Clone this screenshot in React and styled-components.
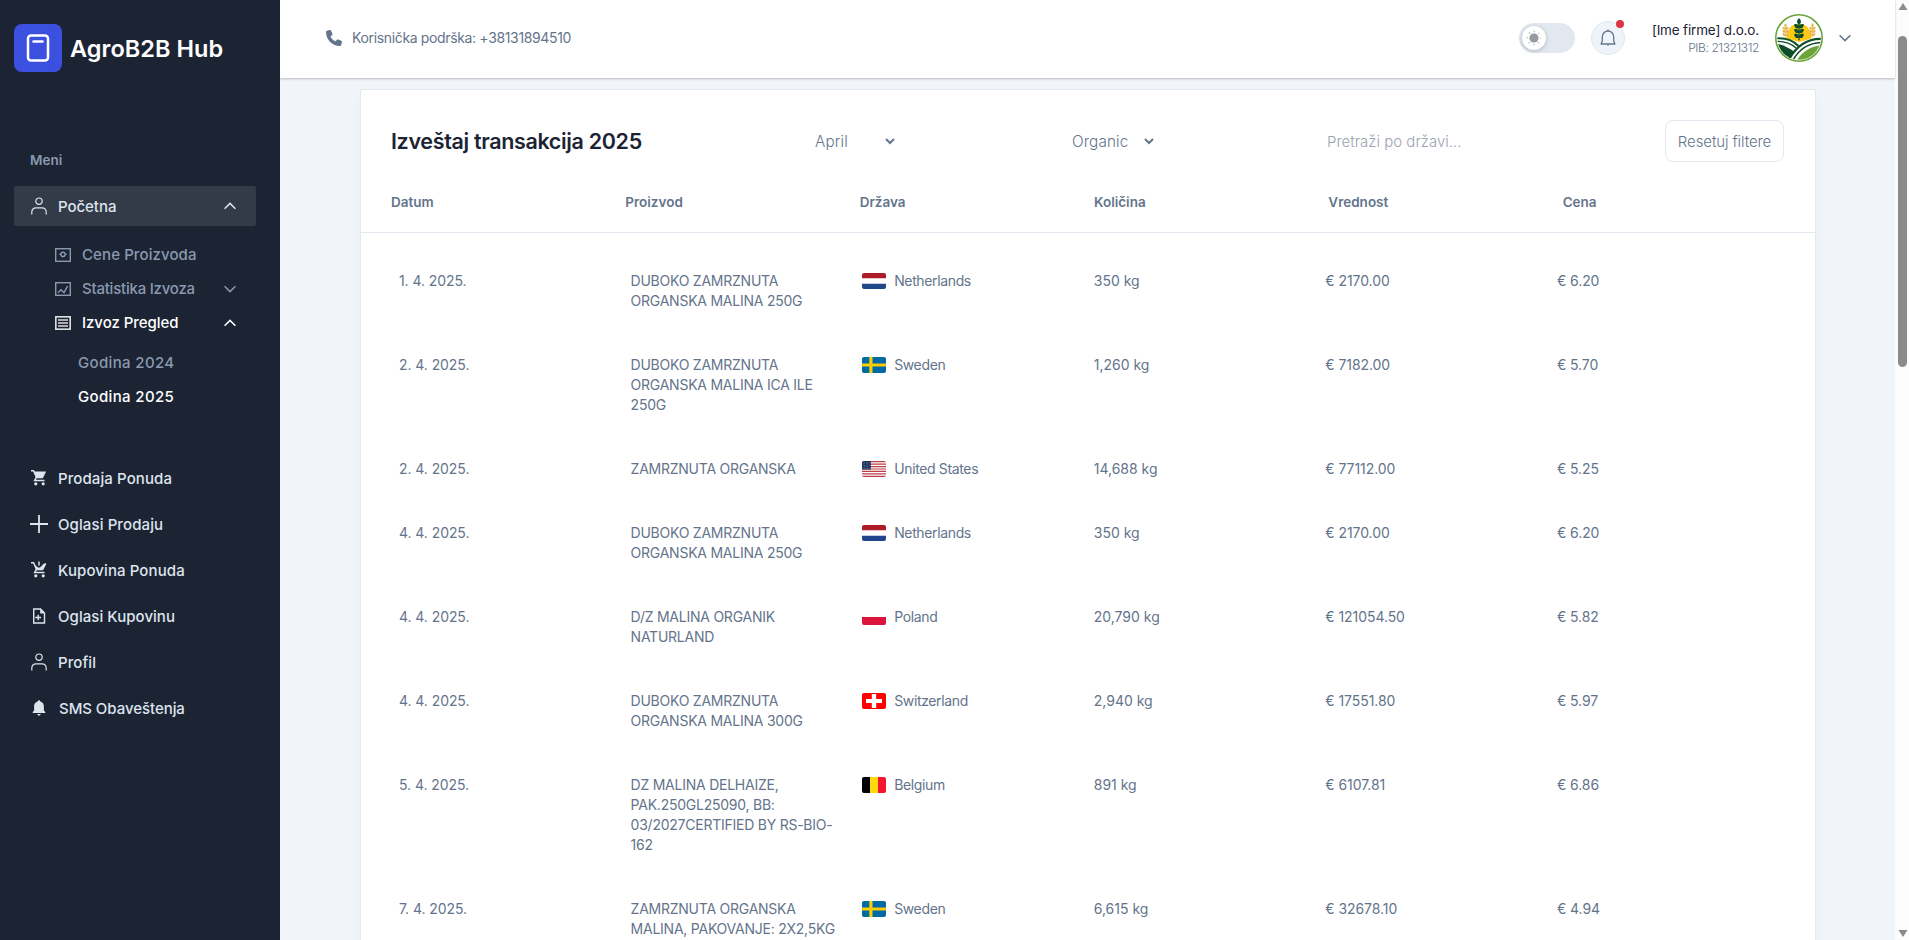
import React from "react";
import styled, { createGlobalStyle } from "styled-components";

const Global = createGlobalStyle`
  *, *::before, *::after { box-sizing: border-box; }
  html, body, #root { height: 100%; margin: 0; overflow: hidden; }
  body {
    background: #f1f5f9;
    color: #64748b;
    font-family: Inter, "Liberation Sans", sans-serif;
    font-size: 16px;
    line-height: 24px;
  }
  button, input { font: inherit; color: inherit; }
`;

const Shell = styled.div`
  display: flex;
  height: 940px;
  overflow: hidden;
`;

/* Sidebar */
const Sidebar = styled.aside`
  width: 280px;
  flex: none;
  background: #1c2434;
  color: #dee4ee;
`;
const Brand = styled.div`
  display: flex;
  align-items: center;
  gap: 8px;
  padding: 24px 14px 0;
  color: #fff;
  font-size: 23.5px;
  line-height: 48px;
  height: 72px;
  font-weight: 600;
  letter-spacing: 0.05px;
  white-space: nowrap;
`;
const BrandName = styled.span`
  padding-top: 2px;
  line-height: 46px;
`;
const MenuTitle = styled.div`
  margin: 78px 0 16px 30px;
  font-size: 13.5px;
  line-height: 20px;
  font-weight: 600;
  color: #8a99af;
`;
const MenuItem = styled.div`
  display: flex;
  align-items: center;
  height: 40px;
  width: 242px;
  margin: 0 0 6px 14px;
  padding: 0 20px 0 16px;
  border-radius: 2px;
  background: ${(p) => (p.$active ? "#333a48" : "transparent")};
  font-size: 15px;
  font-weight: 500;
  letter-spacing: ${(p) => p.$track ?? 0.1}px;
  white-space: nowrap;
  svg { flex: none; }
`;
const Label = styled.span`
  flex: 1;
  margin-left: ${(p) => p.$gap ?? 10}px;
  padding-top: ${(p) => p.$drop ?? 1}px;
`;
const SubList = styled.div`
  padding: 6px 44px 0 55px;
  margin-bottom: 44px;
`;
const SubItem = styled.div`
  display: flex;
  align-items: center;
  height: 34px;
  color: ${(p) => (p.$active ? "#fff" : "#8a99af")};
  font-size: 15px;
  font-weight: 500;
  letter-spacing: ${(p) => p.$track || 0}px;
  white-space: nowrap;
`;
const YearList = styled.div`
  padding: 6px 0 0 23px;
`;

/* Header */
const Main = styled.div`
  flex: 1;
  min-width: 0;
  display: flex;
  flex-direction: column;
`;
const Header = styled.header`
  position: relative;
  z-index: 1;
  height: 78px;
  flex: none;
  display: flex;
  align-items: center;
  justify-content: space-between;
  padding: 0 44px 2px 46px;
  background: #fff;
  box-shadow: 0 1px 2px rgba(28, 36, 52, 0.28);
`;
const Support = styled.div`
  display: flex;
  align-items: center;
  gap: 10px;
  font-size: 14px;
  letter-spacing: -0.35px;
`;
const HeaderTools = styled.div`
  display: flex;
  align-items: center;
`;
const Toggle = styled.div`
  width: 56px;
  height: 30px;
  padding: 3px;
  border-radius: 15px;
  background: #e2e8f0;
`;
const Knob = styled.div`
  width: 24px;
  height: 24px;
  display: grid;
  place-items: center;
  border-radius: 50%;
  background: #fff;
  box-shadow: 0 1px 4px rgba(0, 0, 0, 0.22);
`;
const BellButton = styled.div`
  position: relative;
  width: 34px;
  height: 34px;
  margin-left: 16px;
  display: grid;
  place-items: center;
  border: 1px solid #e2e8f0;
  border-radius: 50%;
  background: #eff4fb;
`;
const BellDot = styled.span`
  position: absolute;
  top: -2px;
  right: 0;
  width: 8px;
  height: 8px;
  border-radius: 50%;
  background: #dc3545;
`;
const Account = styled.div`
  width: 134px;
  margin-right: 16px;
  text-align: right;
  white-space: nowrap;
`;
const AccountName = styled.div`
  font-size: 13.5px;
  line-height: 20px;
  letter-spacing: -0.16px;
  color: #1c2434;
`;
const AccountId = styled.div`
  font-size: 12px;
  font-weight: 300;
  line-height: 16px;
  letter-spacing: -0.4px;
`;
const AccountToggle = styled.div`
  display: flex;
  margin-left: 16px;
`;

/* Report */
const Scroller = styled.div`
  flex: 1;
  min-height: 0;
  overflow: hidden;
  padding-top: 11px;
`;
const Card = styled.section`
  width: 1456px;
  margin-left: 80px;
  min-height: 900px;
  border: 1px solid #e2e8f0;
  border-radius: 2px;
  background: #fff;
  box-shadow: 0 8px 13px -3px rgba(0, 0, 0, 0.07);
`;
const Filters = styled.div`
  display: grid;
  grid-template-columns: 424px 257px 255px 1fr auto;
  align-items: center;
  height: 102px;
  padding: 0 31px 0 30px;
`;
const Title = styled.h1`
  margin: 0;
  font-size: 21.5px;
  line-height: 28px;
  font-weight: 600;
  letter-spacing: -0.34px;
  color: #1c2434;
`;
const Select = styled.div`
  display: flex;
  align-items: center;
  justify-content: space-between;
  width: ${(p) => p.$w}px;
  padding-top: 1px;
  font-weight: 300;
  font-size: 15.3px;
  letter-spacing: 0.12px;
`;
const Search = styled.input`
  width: 200px;
  padding: 2px 0 0;
  border: 0;
  outline: 0;
  background: transparent;
  font-size: 15px;
  font-weight: 300;
  &::placeholder { color: #9ca3af; opacity: 1; }
`;
const Reset = styled.button`
  width: 119px;
  height: 42px;
  padding: 1px 0 0;
  border: 1px solid #e2e8f0;
  border-radius: 8px;
  background: #fff;
  font-size: 15px;
  font-weight: 300;
  letter-spacing: -0.1px;
  white-space: nowrap;
`;
const HeadRow = styled.div`
  display: grid;
  grid-template-columns: repeat(6, 1fr);
  gap: 12px;
  height: 41px;
  margin-bottom: 38px;
  padding: 0 30px;
  border-bottom: 1px solid #e2e8f0;
  font-size: 13.5px;
  line-height: 20px;
  font-weight: 600;
`;
const Row = styled.div`
  display: grid;
  grid-template-columns: repeat(6, 1fr);
  gap: 12px;
  padding: 0 38.5px 0 38px;
  margin-bottom: 44px;
  font-size: 14px;
  line-height: 20px;
`;
const Cell = styled.div`
  letter-spacing: ${(p) => p.$track ?? -0.07}px;
  white-space: nowrap;
`;
const Country = styled(Cell)`
  display: flex;
  align-items: center;
  gap: 8px;
  height: 20px;
`;

/* Scrollbar */
const Scrollbar = styled.div`
  width: 14px;
  flex: none;
  display: flex;
  flex-direction: column;
  align-items: center;
  justify-content: space-between;
  padding: 3px 0 3px 1px;
  background: #fcfcfc;
`;
const Thumb = styled.div`
  width: 9px;
  height: 331px;
  margin: 25px 0 auto;
  border-radius: 5px;
  background: #8b8b8b;
`;

const UserIcon = () => (
  <svg width="18" height="18" viewBox="0 0 18 18" fill="none" stroke="currentColor" strokeWidth="1.2">
    <circle cx="9" cy="4.2" r="3.2" />
    <path d="M1.8 17.5v-2.6c0-2.3 1.8-4.1 4.1-4.1h6.2c2.3 0 4.1 1.8 4.1 4.1v2.6" />
  </svg>
);
const Chevron = ({ up, size = 12 }) => (
  <svg width={size} height="8" viewBox="0 0 12 8" fill="none" stroke="currentColor" strokeWidth="1.5">
    <path d={up ? "M.6 6.8 6 1.4l5.4 5.4" : "M.6 1.2 6 6.6l5.4-5.4"} />
  </svg>
);
const Caret = () => (
  <svg width="10" height="7" viewBox="0 0 10 7" fill="none" stroke="currentColor" strokeWidth="2">
    <path d="M1 1l4 4 4-4" />
  </svg>
);
const MoneyIcon = () => (
  <svg width="16" height="14" viewBox="0 0 16 14" fill="none" stroke="currentColor" strokeWidth="1.4">
    <rect x=".7" y=".7" width="14.6" height="12.6" />
    <circle cx="8" cy="6.4" r="2.1" />
    <path d="M4.3 6.4h1.6M10.1 6.4h1.6" />
  </svg>
);
const ChartIcon = () => (
  <svg width="16" height="14" viewBox="0 0 16 14" fill="none" stroke="currentColor" strokeWidth="1.4">
    <rect x=".7" y=".7" width="14.6" height="12.6" />
    <path d="m3 10.8 3-3 3 2.8 3.6-6.4" />
  </svg>
);
const ListIcon = () => (
  <svg width="16" height="14" viewBox="0 0 16 14" fill="none" stroke="#dcdcdc" strokeWidth="1.7">
    <rect x=".8" y=".8" width="14.4" height="12.4" />
    <path d="M3 4h10M3 7h10M3 10h10" />
  </svg>
);
const CartIcon = ({ plus }) => (
  <svg width="18" height="18" viewBox="0 0 18 18" fill="currentColor">
    <path d={plus ? "M1 1.8h2.6l3 6.8h5.900L15.800 2.500" : "M1 1.800h2.600l3 6.800h5.900"} fill="none" stroke="currentColor" strokeWidth="1.4" />
    {plus ? (
      <path d="M4 3.200 8 6.500h2l4-4h1.800L13 9H6.400zM8.200.5h1.500v4H8.200z" />
    ) : (
      <path d="M3.500 2.500h12.600L13 9H6.300z" />
    )}
    <path d="m6.300 8.400-1.600 3h9.800" fill="none" stroke="currentColor" strokeWidth="1.5" />
    <circle cx="5.8" cy="14.8" r="1.6" />
    <circle cx="13.2" cy="14.8" r="1.6" />
  </svg>
);
const PlusIcon = () => (
  <svg width="18" height="18" viewBox="0 0 18 18" stroke="currentColor" strokeWidth="1.8">
    <path d="M9 0v18M0 9h18" />
  </svg>
);
const FileIcon = () => (
  <svg width="18" height="18" viewBox="0 0 18 18" fill="none" stroke="currentColor" strokeWidth="1.4">
    <path d="M3.7 2h6.8l4 4v10H3.7zM5.2 10.5H11M8.2 7.8v5.4" />
    <path d="M10.2 1.6v4.9h4.6z" fill="currentColor" stroke="none" />
  </svg>
);
const BellSolid = () => (
  <svg width="18" height="18" viewBox="0 0 18 18" fill="currentColor">
    <path d="M9 1.2c.8 0 1.3.6 1.3 1.3 2.4.6 3.6 2.5 3.6 5v4l1.4 1.6v.9H2.7v-.9l1.4-1.6v-4c0-2.5 1.2-4.4 3.6-5C7.7 1.8 8.200 1.200 9 1.200zM7.300 15h3.400c0 .9-.8 1.500-1.700 1.500S7.300 15.900 7.300 15z" />
  </svg>
);
const BellOutline = () => (
  <svg width="18" height="18" viewBox="0 0 18 18" fill="none" stroke="currentColor" strokeWidth="1.3">
    <path d="M2.3 15v-1l1-1.600V7.700a5.700 5.700 0 0 1 11.400 0v4.700l1 1.600v1zM9 .4v1.800M9 15v1.800" />
  </svg>
);
const Phone = () => (
  <svg width="16" height="16" viewBox="0 0 512 512" fill="currentColor">
    <path d="M165 25c-8-19-29-29-48-23L29 26C12 31 0 46 0 64c0 247 201 448 448 448 18 0 33-12 38-29l24-88c5-20-5-41-23-48l-96-40c-17-7-36-2-48 12l-40 49c-70-33-127-90-160-160l49-40c14-12 19-31 12-48z" />
  </svg>
);
const Sun = () => (
  <svg width="16" height="16" viewBox="0 0 16 16" fill="#969aa1">
    <circle cx="8" cy="8" r="4.6" />
    <circle cx="8" cy="8" r="6.7" fill="none" stroke="#969aa1" strokeWidth="1.2" strokeDasharray="1 4.262" strokeDashoffset=".5" />
  </svg>
);
const Logo = () => (
  <svg width="48" height="48" viewBox="0 0 48 48" fill="none">
    <rect width="48" height="48" rx="8" fill="#3c50e0" />
    <rect x="14" y="11.5" width="20" height="25" rx="3" stroke="#fff" strokeWidth="2.5" />
    <path d="M19.5 17.5h9" stroke="#fff" strokeWidth="2.5" strokeLinecap="round" />
  </svg>
);
const Leaf = ({ x, y, r, s = 1, c }) => (
  <path d="M0 0C-3-1.5-3-4.5 0-7 3-4.5 3-1.5 0 0z" fill={c} transform={`translate(${x} ${y}) rotate(${r}) scale(${s})`} />
);
const Ear = ({ x, y, s, c }) => (
  <g transform={`translate(${x} ${y}) scale(${s})`}>
    <path d="M0-10V14" stroke={c} strokeWidth="1.4" />
    <Leaf x={0} y={-4} r={0} c={c} />
    {[0, 5.5, 11].map((v) => (
      <g key={v}>
        <Leaf x={0} y={v} r={-52} c={c} />
        <Leaf x={0} y={v} r={52} c={c} />
      </g>
    ))}
  </g>
);
const Avatar = () => (
  <svg width="48" height="48" viewBox="0 0 48 48" fill="none">
    <defs><clipPath id="disc"><circle cx="24" cy="24" r="21.8" /></clipPath></defs>
    <circle cx="24" cy="24" r="23.2" fill="#fff" stroke="#6ba43a" strokeWidth="1.6" />
    <g clipPath="url(#disc)">
      <path d="M11.5 24.5c0-7 3-14.5 12.5-14.5s12.500 7.500 12.500 14.500L24 28z" fill="#fcc917" />
      <Ear x={10.5} y={15.5} s={0.56} c="#e8b650" />
      <Ear x={37.5} y={15.5} s={0.56} c="#e8b650" />
      <Ear x={24} y={14} s={0.88} c="#0e4f2a" />
      <path d="M0 24.5c9-1 17 1 23.5 7.5" stroke="#0e4f2a" strokeWidth="1.8" />
      <path d="M0 27.5c8-.5 15 1 21 6.5" stroke="#0e4f2a" strokeWidth="1.3" />
      <path d="M0 29.5c8 1 14 4.5 19 8L13 48H0z" fill="#0e4f2a" />
      <path d="M48 25c-15-1-27 7-35 22" stroke="#0e4f2a" strokeWidth="2.4" />
      <path d="M48 28.5c-13 0-24 6.5-30.5 18.5" stroke="#0e4f2a" strokeWidth="1.5" />
      <path d="M48 31c-12 1-21 6-27 17h27z" fill="#6ba43a" />
    </g>
  </svg>
);

const flagArt = {
  Netherlands: <><path fill="#fff" d="M0 0h24v16H0z" /><path fill="#ae1c28" d="M0 0h24v5.33H0z" /><path fill="#21468b" d="M0 10.67h24V16H0z" /></>,
  Sweden: <><path fill="#006aa7" d="M0 0h24v16H0z" /><path fill="#fecc00" d="M7.3 0h3.2v16H7.3zM0 6.4h24v3.2H0z" /></>,
  "United States": <><path fill="#fff" d="M0 0h24v16H0z" /><path stroke="#bd3d44" strokeWidth="1.23" d="M0 .6h24M0 3.08h24M0 5.54h24M0 8h24M0 10.46h24M0 12.92h24M0 15.38h24" /><path fill="#192f5d" d="M0 0h9v8.6H0z" /><path stroke="#fff" strokeOpacity=".5" strokeDasharray=".7 .8" strokeWidth=".7" d="M.8 1.2H9M.8 2.8H9M.8 4.4H9M.8 6H9M.8 7.6H9" /></>,
  Poland: <><path fill="#fff" d="M0 0h24v16H0z" /><path fill="#dc143c" d="M0 8h24v8H0z" /></>,
  Switzerland: <><path fill="#f00" d="M0 0h24v16H0z" /><path fill="#fff" d="M9.8 1h4.4v14H9.8zM4 6h16v4H4z" /></>,
  Belgium: <><path fill="#000" d="M0 0h8v16H0z" /><path fill="#ffd90c" d="M8 0h8v16H8z" /><path fill="#f31830" d="M16 0h8v16h-8z" /></>,
};
const FlagSvg = styled.svg`
  border-radius: 2px;
`;
const Flag = ({ country }) => (
  <FlagSvg width="24" height="16" viewBox="0 0 24 16">{flagArt[country]}</FlagSvg>
);

const rows = [
  ["1. 4. 2025.", ["DUBOKO ZAMRZNUTA", "ORGANSKA MALINA 250G"], "Netherlands", "350 kg", "€ 2170.00", "€ 6.20"],
  ["2. 4. 2025.", ["DUBOKO ZAMRZNUTA", "ORGANSKA MALINA ICA ILE", "250G"], "Sweden", "1,260 kg", "€ 7182.00", "€ 5.70"],
  ["2. 4. 2025.", ["ZAMRZNUTA ORGANSKA"], "United States", "14,688 kg", "€ 77112.00", "€ 5.25"],
  ["4. 4. 2025.", ["DUBOKO ZAMRZNUTA", "ORGANSKA MALINA 250G"], "Netherlands", "350 kg", "€ 2170.00", "€ 6.20"],
  ["4. 4. 2025.", ["D/Z MALINA ORGANIK", "NATURLAND"], "Poland", "20,790 kg", "€ 121054.50", "€ 5.82"],
  ["4. 4. 2025.", ["DUBOKO ZAMRZNUTA", "ORGANSKA MALINA 300G"], "Switzerland", "2,940 kg", "€ 17551.80", "€ 5.97"],
  ["5. 4. 2025.", ["DZ MALINA DELHAIZE,", "PAK.250GL25090, BB:", "03/2027CERTIFIED BY RS-BIO-", "162"], "Belgium", "891 kg", "€ 6107.81", "€ 6.86"],
  ["7. 4. 2025.", ["ZAMRZNUTA ORGANSKA", "MALINA, PAKOVANJE: 2X2,5KG"], "Sweden", "6,615 kg", "€ 32678.10", "€ 4.94"],
];

export default function App() {
  return (
    <Shell>
      <Global />
      <Sidebar>
        <Brand><Logo /><BrandName>AgroB2B Hub</BrandName></Brand>
        <MenuTitle>Meni</MenuTitle>
        <MenuItem $active $track={-0.05}><UserIcon /><Label>Početna</Label><Chevron up /></MenuItem>
        <SubList>
          <SubItem $track={0.1}><MoneyIcon /><Label $gap={11} $drop={0}>Cene Proizvoda</Label></SubItem>
          <SubItem $track={-0.22}><ChartIcon /><Label $gap={11} $drop={0}>Statistika Izvoza</Label><Chevron /></SubItem>
          <SubItem $active $track={-0.05}><ListIcon /><Label $gap={11} $drop={0}>Izvoz Pregled</Label><Chevron up /></SubItem>
          <YearList>
            <SubItem $track={0.35}>Godina 2024</SubItem>
            <SubItem $active $track={0.35}>Godina 2025</SubItem>
          </YearList>
        </SubList>
        <MenuItem><CartIcon /><Label>Prodaja Ponuda</Label></MenuItem>
        <MenuItem><PlusIcon /><Label>Oglasi Prodaju</Label></MenuItem>
        <MenuItem><CartIcon plus /><Label>Kupovina Ponuda</Label></MenuItem>
        <MenuItem $track={0.05}><FileIcon /><Label>Oglasi Kupovinu</Label></MenuItem>
        <MenuItem><UserIcon /><Label>Profil</Label></MenuItem>
        <MenuItem $track={-0.05}><BellSolid /><Label $gap={11}>SMS Obaveštenja</Label></MenuItem>
      </Sidebar>
      <Main>
        <Header>
          <Support><Phone />Korisnička podrška: +38131894510</Support>
          <HeaderTools>
            <Toggle><Knob><Sun /></Knob></Toggle>
            <BellButton><BellOutline /><BellDot /></BellButton>
            <Account>
              <AccountName>[Ime firme] d.o.o.</AccountName>
              <AccountId>PIB: 21321312</AccountId>
            </Account>
            <Avatar />
            <AccountToggle><Chevron /></AccountToggle>
          </HeaderTools>
        </Header>
        <Scroller>
          <Card>
            <Filters>
              <Title>Izveštaj transakcija 2025</Title>
              <Select $w={80}>April<Caret /></Select>
              <Select $w={82}>Organic<Caret /></Select>
              <Search placeholder="Pretraži po državi..." />
              <Reset>Resetuj filtere</Reset>
            </Filters>
            <HeadRow>
              {["Datum", "Proizvod", "Država", "Količina", "Vrednost", "Cena"].map((h) => <div key={h}>{h}</div>)}
            </HeadRow>
            {rows.map(([date, product, country, qty, value, price], i) => (
              <Row key={i}>
                <Cell>{date}</Cell>
                <Cell $track={-0.24}>{product.map((line) => <div key={line}>{line}</div>)}</Cell>
                <Country $track={-0.36}><Flag country={country} />{country}</Country>
                <Cell $track={0}>{qty}</Cell>
                <Cell>{value}</Cell>
                <Cell>{price}</Cell>
              </Row>
            ))}
          </Card>
        </Scroller>
      </Main>
      <Scrollbar>
        <svg width="10" height="8" viewBox="0 0 10 8"><path d="M5 0l4.5 7H.5z" fill="#8b8b8b" /></svg>
        <Thumb />
        <svg width="10" height="8" viewBox="0 0 10 8"><path d="M5 8 .5 1h9z" fill="#8b8b8b" /></svg>
      </Scrollbar>
    </Shell>
  );
}
